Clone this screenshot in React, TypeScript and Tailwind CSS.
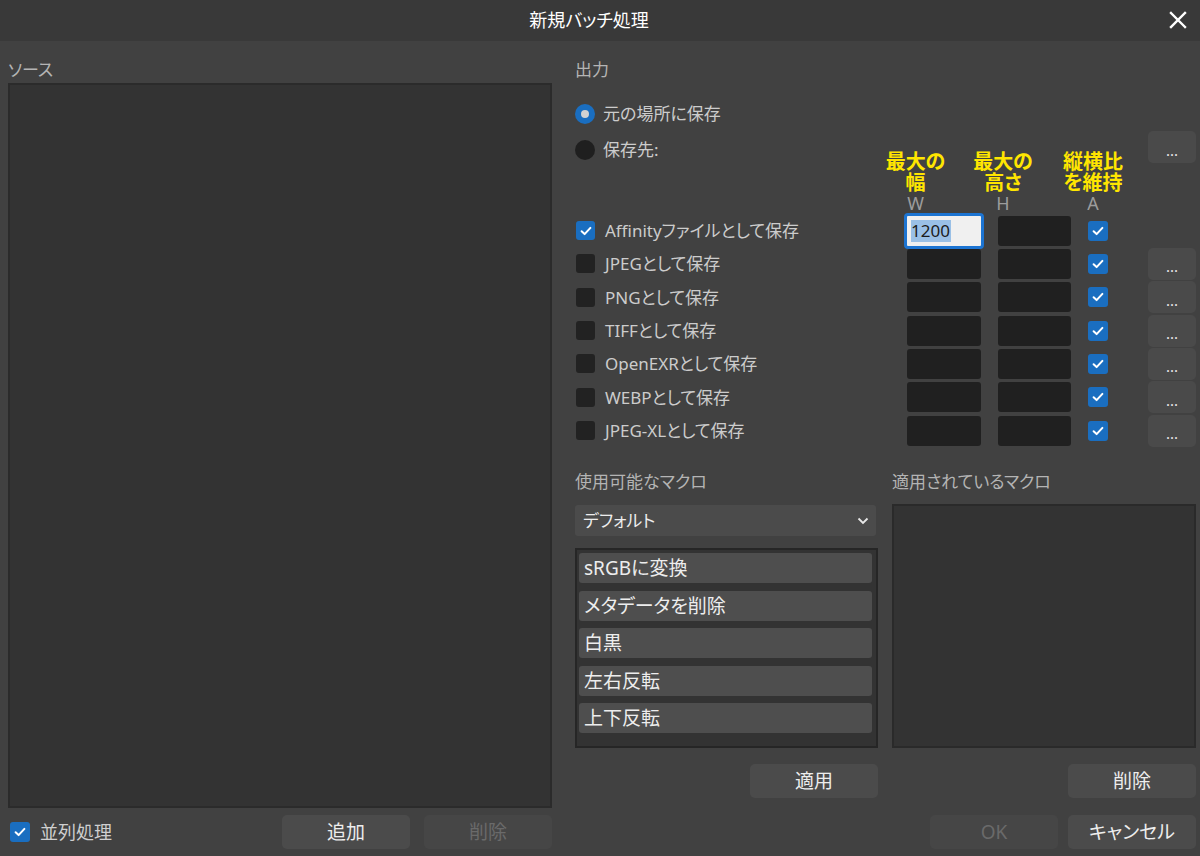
import React from "react";

const Check = ({ checked, size = 19 }: { checked: boolean; size?: number }) =>
  checked ? (
    <div
      className="rounded-[3px] bg-[#1a6ec0] flex items-center justify-center shrink-0"
      style={{ width: size, height: size }}
    >
      <svg width="12" height="10" viewBox="0 0 12 10">
        <path d="M1.6 5.3 L4.6 8.1 L10.4 1.9" stroke="#ffffff" strokeWidth="2" fill="none" strokeLinecap="round" strokeLinejoin="round" />
      </svg>
    </div>
  ) : (
    <div className="rounded-[3px] bg-[#222222] shrink-0" style={{ width: size, height: size }} />
  );

const Radio = ({ on }: { on: boolean }) =>
  on ? (
    <div className="w-[20px] h-[20px] rounded-full bg-[#1a6ec0] flex items-center justify-center shrink-0">
      <div className="w-[8px] h-[8px] rounded-full bg-[#d2d2d2]" />
    </div>
  ) : (
    <div className="w-[20px] h-[20px] rounded-full bg-[#1f1f1f] shrink-0" />
  );

const Dots = () => (
  <div className="w-[48px] h-[32px] rounded-[5px] bg-[#4a4a4a] flex items-center justify-center text-[15px] leading-[15px] text-[#e6e6e6] pt-[6px]">
    ...
  </div>
);

const Btn = ({ label, disabled = false }: { label: string; disabled?: boolean }) => (
  <div
    className={
      disabled
        ? "w-[128px] h-[34px] rounded-[5px] bg-[#464646] flex items-center justify-center text-[19px] text-[#6a6a6a]"
        : "w-[128px] h-[34px] rounded-[5px] bg-[#4b4b4b] flex items-center justify-center text-[19px] text-[#ededed]"
    }
  >
    {label}
  </div>
);

const Head = ({ l1, l2, letter, w }: { l1: string; l2: string; letter: string; w: string }) => (
  <div className={`${w} flex flex-col items-center`}>
    <div className="whitespace-nowrap text-[20px] leading-[21px] font-bold text-[#ffe600] text-center">
      {l1}
      <br />
      {l2}
    </div>
    <div className="text-[18px] leading-[21px] text-[#9c9c9c]">{letter}</div>
  </div>
);

const rows = [
  "Affinityファイルとして保存",
  "JPEGとして保存",
  "PNGとして保存",
  "TIFFとして保存",
  "OpenEXRとして保存",
  "WEBPとして保存",
  "JPEG-XLとして保存",
];

const macros = ["sRGBに変換", "メタデータを削除", "白黒", "左右反転", "上下反転"];

export default function App() {
  return (
    <div className="w-[1200px] h-[856px] bg-[#414141] flex flex-col font-['Noto_Sans','Noto_Sans_CJK_JP',sans-serif] [font-feature-settings:'palt'] overflow-hidden select-none">
      {/* Title bar */}
      <div className="h-[41px] bg-[#393939] flex items-center relative shrink-0">
        <div className="flex-1 text-center text-[18px] text-white pr-[22px] leading-[41px]">新規バッチ処理</div>
        <div className="absolute right-[10px] top-[8px] w-[24px] h-[24px] flex items-center justify-center">
          <svg width="18" height="18" viewBox="0 0 18 18">
            <path d="M2 2 L16 16 M16 2 L2 16" stroke="#ffffff" strokeWidth="2.4" strokeLinecap="square" />
          </svg>
        </div>
      </div>

      <div className="flex-1 flex">
        {/* Left column */}
        <div className="ml-[8px] w-[544px] flex flex-col pt-[16px] pb-[7px]">
          <div className="h-[26px] leading-[26px] text-[17px] text-[#b4b4b4]">ソース</div>
          <div className="flex-1 bg-[#333333] border-2 border-[#2b2b2b]" />
          <div className="mt-[7px] h-[34px] flex items-center">
            <div className="ml-[2px]">
              <Check checked size={20} />
            </div>
            <div className="ml-[10px] text-[18px] text-[#cfcfcf]">並列処理</div>
            <div className="flex-1" />
            <div className="flex gap-[14px]">
              <Btn label="追加" />
              <Btn label="削除" disabled />
            </div>
          </div>
        </div>

        {/* Right column */}
        <div className="ml-[23px] w-[621px] flex flex-col pt-[16px]">
          <div className="h-[26px] leading-[26px] text-[17px] text-[#b4b4b4]">出力</div>

          <div className="mt-[13px] h-[36px] flex items-center">
            <Radio on />
            <div className="ml-[8px] text-[17px] text-[#cccccc]">元の場所に保存</div>
          </div>

          {/* header block */}
          <div className="h-[82px] flex items-start">
            <div className="w-[331px] h-[36px] flex items-center">
              <Radio on={false} />
              <div className="ml-[8px] text-[17px] text-[#cccccc]">保存先:</div>
            </div>
            <div className="w-[76px] pt-[19px] flex">
              <Head l1="最大の" l2="幅" letter="W" w="w-[19px]" />
            </div>
            <div className="ml-[16px] w-[73px] pt-[19px] flex">
              <Head l1="最大の" l2="高さ" letter="H" w="w-[10px]" />
            </div>
            <div className="ml-[17px] w-[20px] pt-[19px] flex">
              <Head l1="縦横比" l2="を維持" letter="A" w="w-[10px]" />
            </div>
            <div className="ml-[40px] -mt-[1px]">
              <Dots />
            </div>
          </div>

          {/* rows */}
          <div className="flex flex-col">
            {rows.map((r, i) => (
              <div key={r} className="h-[33.33px] flex items-center">
                <div className="w-[331px] flex items-center">
                  <div className="ml-[1px]">
                    <Check checked={i === 0} />
                  </div>
                  <div className="ml-[10px] text-[17px] text-[#cccccc] whitespace-nowrap">{r}</div>
                </div>
                <div className="w-[76px] flex">
                  {i === 0 ? (
                    <div className="ml-[1px] w-[74px] h-[30px] relative">
                      <div className="absolute -inset-[3px] rounded-[4px] border-[3px] border-[#1c74d2] bg-[#f0f0f0] flex items-center pl-[4px]">
                        <span className="bg-[#9ac0e6] text-[#1c1c1c] text-[17px] leading-[22px] pr-[1px]">1200</span>
                      </div>
                    </div>
                  ) : (
                    <div className="ml-[1px] w-[74px] h-[30px] rounded-[3px] bg-[#202020]" />
                  )}
                </div>
                <div className="ml-[16px] w-[73px] h-[30px] rounded-[3px] bg-[#202020]" />
                <div className="ml-[17px] w-[20px] flex">
                  <Check checked size={20} />
                </div>
                <div className="ml-[40px]">{i > 0 ? <Dots /> : <div className="w-[48px]" />}</div>
              </div>
            ))}
          </div>

          {/* macros */}
          <div className="mt-[22px] flex">
            <div className="w-[303px] flex flex-col">
              <div className="h-[26px] leading-[26px] text-[17px] text-[#b4b4b4]">使用可能なマクロ</div>
              <div className="mt-[10px] w-[301px] h-[31px] rounded-[3px] bg-[#4b4b4b] flex items-center pl-[8px] pr-[7px]">
                <div className="flex-1 text-[17px] text-[#ededed]">デフォルト</div>
                <svg width="12" height="8" viewBox="0 0 12 8">
                  <path d="M1.5 1.5 L6 6 L10.5 1.5" stroke="#e8e8e8" strokeWidth="1.8" fill="none" />
                </svg>
              </div>
              <div className="mt-[12px] h-[200px] bg-[#333333] border-2 border-[#262626] pt-[3px] pl-[2px] pr-[4px] flex flex-col gap-[7.5px]">
                {macros.map((m) => (
                  <div key={m} className="h-[30px] rounded-[3px] bg-[#4e4e4e] flex items-center px-[5px] text-[19px] text-[#ededed]">
                    {m}
                  </div>
                ))}
              </div>
              <div className="mt-[16px] flex justify-end">
                <Btn label="適用" />
              </div>
            </div>
            <div className="ml-[14px] w-[304px] flex flex-col">
              <div className="h-[26px] leading-[26px] text-[17px] text-[#b4b4b4]">適用されているマクロ</div>
              <div className="mt-[9px] h-[244px] bg-[#333333] border-2 border-[#2a2a2a]" />
              <div className="mt-[16px] flex justify-end">
                <Btn label="削除" />
              </div>
            </div>
          </div>

          <div className="mt-[17px] flex justify-end gap-[10px]">
            <Btn label="OK" disabled />
            <Btn label="キャンセル" />
          </div>
        </div>
      </div>
    </div>
  );
}
